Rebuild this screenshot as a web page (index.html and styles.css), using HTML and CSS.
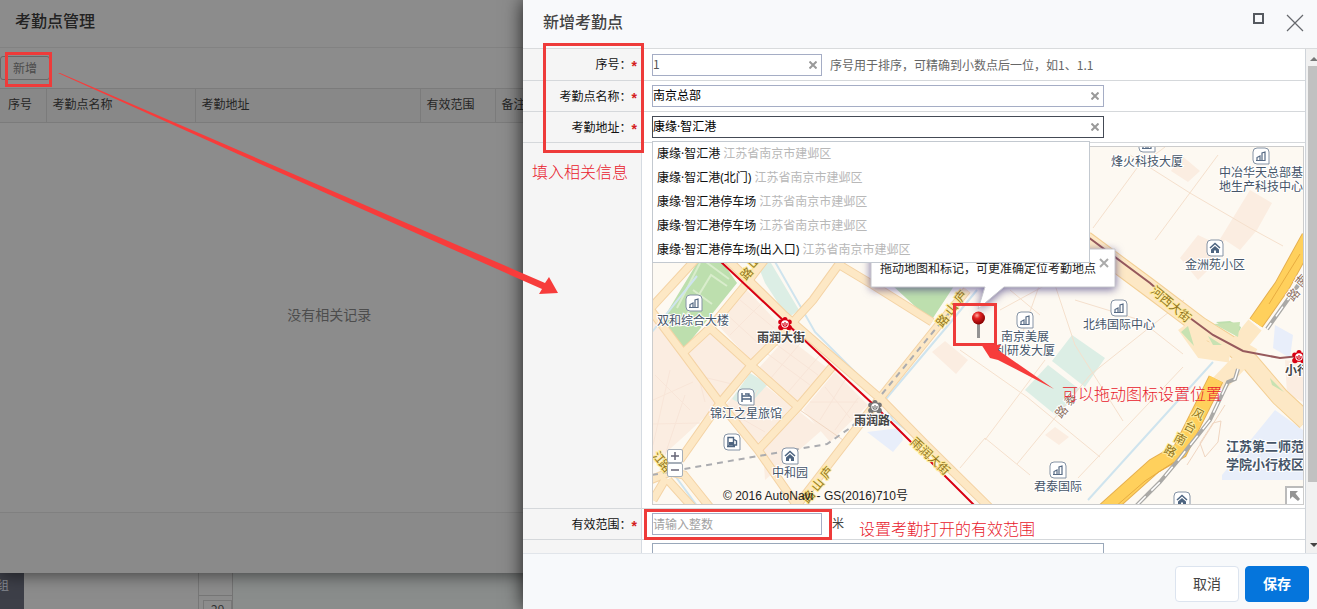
FILE: index.html
```html
<!DOCTYPE html>
<html lang="zh-CN">
<head>
<meta charset="utf-8">
<title>考勤点管理</title>
<link rel="stylesheet" href="styles.css">
</head>
<body>
<div class="desktop">
  <div class="backdrop">
    <div class="backdrop-menu">组</div>
    <div class="backdrop-pane"></div>
    <div class="backdrop-cal"><span>29</span></div>
    <div class="backdrop-rest"></div>
  </div>

  <section class="window list-window">
    <h1 class="list-title">考勤点管理</h1>
    <div class="toolbar"><button class="add-button" type="button">新增</button></div>
    <table class="list-table">
      <thead><tr><th class="col-no">序号</th><th class="col-name">考勤点名称</th><th class="col-address">考勤地址</th><th class="col-range">有效范围</th><th>备注</th></tr></thead>
    </table>
    <p class="empty">没有相关记录</p>
    <div class="list-footer"></div>
  </section>

  <section class="window form-window">
    <header class="form-header">
      <h2>新增考勤点</h2>
      <button class="window-button" type="button" aria-label="最大化"><svg width="12" height="12" viewBox="0 0 12 12"><rect x="1" y="1" width="9" height="9" fill="none" stroke="#55595f" stroke-width="2"/></svg></button>
      <button class="window-button close-button" type="button" aria-label="关闭"><svg width="20" height="20" viewBox="0 0 20 20"><path d="M2 2l16 16M18 2l-16 16" stroke="#66696d" stroke-width="1.200"/></svg></button>
    </header>

    <div class="form-body">
      <form class="fields" id="point">
        <div class="row">
          <label class="name" for="no">序号<i>：</i><b>*</b></label>
          <div class="value">
            <span class="box short"><input id="no" type="text" value="1"><button type="button" class="clear" aria-label="清除"><svg width="8" height="8" viewBox="0 0 8 8"><path d="M.5.5l7 7M7.500.5l-7 7"/></svg></button></span>
            <span class="hint">序号用于排序<i>，</i>可精确到小数点后一位<i>，</i>如1、1.1</span>
          </div>
        </div>
        <div class="row">
          <label class="name" for="pname">考勤点名称<i>：</i><b>*</b></label>
          <div class="value">
            <span class="box"><input class="filled" id="pname" type="text" value="南京总部"><button type="button" class="clear" aria-label="清除"><svg width="8" height="8" viewBox="0 0 8 8"><path d="M.5.5l7 7M7.500.5l-7 7"/></svg></button></span>
          </div>
        </div>
        <div class="row">
          <label class="name" for="addr">考勤地址<i>：</i><b>*</b></label>
          <div class="value">
            <span class="box"><input class="filled active" id="addr" type="text" value="康缘·智汇港"><button type="button" class="clear" aria-label="清除"><svg width="8" height="8" viewBox="0 0 8 8"><path d="M.5.5l7 7M7.500.5l-7 7"/></svg></button></span>
            <ul class="suggest">
              <li>康缘·智汇港 <span>江苏省南京市建邺区</span></li>
              <li>康缘·智汇港(北门) <span>江苏省南京市建邺区</span></li>
              <li>康缘·智汇港停车场 <span>江苏省南京市建邺区</span></li>
              <li>康缘·智汇港停车场 <span>江苏省南京市建邺区</span></li>
              <li>康缘·智汇港停车场(出入口) <span>江苏省南京市建邺区</span></li>
            </ul>
          </div>
        </div>
        <div class="row map-row">
          <div class="name"></div>
          <div class="value">
            <div class="map">
              <svg class="map-art" viewBox="653 147 650 357" preserveAspectRatio="xMidYMid slice" role="img" aria-label="地图">
                <defs>
                  <g id="badge"><path d="M-4-8H4Q8-8 8-4V8H-4Q-8 8-8 4V-4Q-8-8-4-8z" fill="#fff" stroke="#8593a5"/></g>
                  <g id="building"><use href="#badge"/><path d="M-5 4.500H4V-4L1-3V4.500M-4 4V1.500L-1 0V4" fill="none" stroke="#566a84" stroke-width="1.200"/></g>
                  <g id="home"><use href="#badge"/><path d="M-5 0L0-4.500 5 0" fill="none" stroke="#4d6480" stroke-width="1.500"/><path d="M-4 1.500L0-2 4 1.500V5H1V2.500H-1V5H-4z" fill="#4d6480"/></g>
                  <g id="hotel"><use href="#badge"/><path d="M-4-4V5M-4 2H5M5-1V5M-4-1H5M-1-3H3V-1" fill="none" stroke="#4d6480" stroke-width="1.400"/></g>
                  <g id="fuel"><use href="#badge"/><path d="M-4-4.500H1.500V4H-4zM-5 4.500H3M2-2.500L4.500-1V3H2" fill="none" stroke="#4d6480" stroke-width="1.400"/><path d="M-3 0H1V3H-3z" fill="#4d6480"/></g>
                  <g id="metro"><circle cy="-4.500" r="2.500"/><circle cx="4.300" cy="-2" r="2.500"/><circle cx="-4.300" cy="-2" r="2.500"/><circle cx="4" cy="3.500" r="2.800"/><circle cx="-4" cy="3.500" r="2.800"/><circle r="5"/><circle r="3.700" fill="#fff"/><path d="M-2-1Q-2.500 2.200 0 2.200T2-1M0-2V1" fill="none" stroke="currentColor" stroke-width="1.200"/></g>
                  <radialGradient id="pin" cx=".38" cy=".3" r=".7"><stop offset="0" stop-color="#ffaca0"/><stop offset=".35" stop-color="#e32222"/><stop offset="1" stop-color="#850000"/></radialGradient>
                  <g id="streets" fill="none">
                    <path d="M650 309L683 353 720 403 758 450 800 510M650 309L695 260M683 353L710 328 743 288 766 258M710 328L753 367 798 407M680 460L720 403 753 363 783 333 813 300 842 260M758 450L798 407 832 367M838 264L873 285 932 322"/>
                    <path d="M722 254L785 316 882 400 925 444 992 510"/>
                    <path d="M795 508L873 407 933 332 967 290"/>
                    <path d="M650 480L670 472 684 475 712 510M653 500L666 478M668 480L695 510"/>
                  </g>
                </defs>
                <rect x="640" y="130" width="680" height="400" fill="#fdf9f2"/>
                <g fill="#fbede1">
                  <path d="M652 318L720 403 680 440 652 465zM715 322L745 288 783 328 753 363zM757 370L787 337 830 370 798 405zM803 410L835 372 868 405 830 442zM724 407L752 375 792 407 758 443zM685 350L710 332 748 367 720 397zM763 450L800 412 822 430 765 480z"/>
                  <path d="M932 352L945 341 968 360 956 374zM1181 155L1200 171 1188 182 1171 171zM1250 190L1272 203 1257 230 1240 250 1225 240 1210 268 1198 280 1180 258 1198 235 1217 244zM1045 435L1055 427 1069 437 1059 445zM1285 360L1303 362V402L1287 394z"/>
                </g>
                <path d="M660 324L697 263H723L737 283 683 350zM893 286H954L931 321zM1216 322L1230 321 1241 327 1238 337z" fill="#bddfae"/>
                <path d="M677 308L700 263M686 316L711 275 727 286M693 290L712 304M706 262L729 279" fill="none" stroke="#d9edcc" stroke-width="2"/>
                <path d="M757 263H771L799 310 788 318 765 283zM1072 335L1105 358 1085 387 1052 361zM1048 365L1079 389 1058 417 1025 390zM750 373L768 384 747 407 732 399z" fill="#dceee5"/>
                <path d="M867 432L900 428 903 440 893 452zM1275 325L1293 335 1290 358 1273 348zM1222 475L1275 410 1303 430V480H1222z" fill="#e8eefa"/>
                <g fill="none" stroke="#f6ddcb" stroke-width="1">
                  <path d="M655 375L690 410M653 400L693 382M670 370L653 445M653 424L700 423M685 395L665 455M695 362L705 402M695 375L732 384M765 352L810 385M773 342L818 375M765 385L803 340M783 398L820 355M810 402H858M825 387L850 418M820 420L845 380M835 430L858 398M723 408L765 432M738 425L758 390M724 312L758 343M740 300L774 328M730 335L762 303" stroke="#f8e5d8"/>
                  <path d="M1093 228L1137 168 1165 147M1155 240L1218 155M1130 155L1190 193 1250 228 1283 246M1010 290L1040 315M1050 255L1020 340M1040 240L1075 345 1123 421M960 350L1027 397 1100 457M985 440L1045 360M1017 464L1090 375 1184 300M985 438L1030 475M1075 300L1140 320 1183 354M1078 478L1183 367M960 468L985 438M1000 310L1110 250" stroke="#f5e0cd"/>
                  <path d="M800 410L843 440M1187 465L1225 405M1200 443L1213 423 1221 421 1218 442 1205 457z" stroke="#f0d6c1"/>
                </g>
                <path d="M774 260L815 332 880 397 893 420 920 440M885 400L950 323 977 290M1088 500L1213 362M652 332L697 276M660 455L700 510" fill="none" stroke="#cfe4ee" stroke-width="2"/>
                <use href="#streets" stroke="#f4d3a5" stroke-width="9"/>
                <use href="#streets" stroke="#fde8c5" stroke-width="7"/>
                <path d="M1085 240L1147 286 1200 326 1232 346 1250 362 1280 397 1306 421" fill="none" stroke="#f3cf94" stroke-width="19"/>
                <path d="M1085 240L1147 286 1200 326 1232 346 1250 362 1280 397 1306 421M1250 345L1240 362 1218 385M1185 325L1203 350 1230 354M1255 325L1237 347" fill="none" stroke="#fde8c5" stroke-width="17"/>
                <path d="M1214 324L1240 322 1238 337zM1208 336L1222 345 1213 345zM1181 332L1194 346 1188 326zM1270 378L1284 392 1272 385z" fill="#c8e2b2"/>
                <g fill="none"><path d="M1309 237L1282 286 1256 323M1216 379L1180 451 1154 466 1105 510" stroke="#e5af50" stroke-width="16"/><path d="M1309 237L1282 286 1256 323M1216 379L1180 451 1154 466 1105 510" stroke="#ffd05c" stroke-width="14"/><path d="M1174 462L1145 481 1115 507M1300 254L1269 304" stroke="#e8ac40"/></g>
                <path d="M1306 274L1267 329M1238 369L1235 379 1228 382 1210 420 1180 458 1160 482 1135 507" fill="none" stroke="#aaa9a6" stroke-width="4"/>
                <path d="M1306 274L1267 329M1238 369L1235 379 1228 382 1210 420 1180 458 1160 482 1135 507" fill="none" stroke="#fff" stroke-width="1.500" stroke-dasharray="12 8"/>
                <path d="M652 475L690 468 770 454 827 444 850 428 875 406M882 394L933 332 957 304" fill="none" stroke="#abacb0" stroke-width="2" stroke-dasharray="6 5"/>
                <path d="M719 260L785 322 875 406 974 505" fill="none" stroke="#d80012" stroke-width="2"/>
                <path d="M1088 237L1150 283 1190 318 1213 335 1243 351 1280 358 1300 356" fill="none" stroke="#96595c" stroke-width="2"/>
                <g class="street-label">
                  <text x="746 753" y="281 269" rotate="-48">路山</text>
                  <text x="942 951 960" y="328 316 304" rotate="-50">路山庐</text>
                  <text x="808 817 826" y="504 492 480" rotate="-50">路山庐</text>
                  <text transform="translate(910 443) rotate(43)">雨润大街</text>
                  <text transform="translate(1150 292) rotate(40)">河西大街</text>
                  <text x="1191 1183 1173 1163" y="415 428 440 452" rotate="28">风台南路</text>
                  <text x="652 658" y="456 464" rotate="50">江路</text>
                </g>
                <g class="minor-label"><text x="1061 1070" y="419 407" rotate="-50">路泰</text><text x="1293 1301" y="302 288" rotate="-50">路南</text></g>
                <g class="place">
                  <use href="#building" x="694" y="303"/><text x="693" y="325">双和综合大楼</text>
                  <use href="#hotel" x="746" y="397"/><text x="746" y="418">锦江之星旅馆</text>
                  <use href="#fuel" x="732" y="442"/>
                  <use href="#home" x="790" y="456"/><text x="790" y="477">中和园</text>
                  <use href="#building" x="1147" y="144"/><text x="1147" y="166">烽火科技大厦</text>
                  <use href="#building" x="1261" y="156"/><text x="1261" y="177">中冶华天总部基</text><text x="1261" y="191">地生产科技中心</text>
                  <use href="#home" x="1215" y="248"/><text x="1215" y="269">金洲苑小区</text>
                  <use href="#building" x="1119" y="308"/><text x="1119" y="329">北纬国际中心</text>
                  <use href="#building" x="1025" y="320"/><text x="1025" y="341">南京美展</text><text x="1025" y="355">利研发大厦</text>
                  <use href="#building" x="1058" y="470"/><text x="1058" y="491">君泰国际</text>
                  <use href="#home" x="1182" y="500"/>
                  <g class="strong"><text x="1265" y="451">江苏第二师范</text><text x="1265" y="469">学院小行校区</text></g>
                </g>
                <g class="station">
                  <use href="#metro" x="785" y="324" fill="#d80012" color="#d80012"/><text x="781" y="342">雨润大街</text>
                  <use href="#metro" x="875" y="407" fill="#777" color="#777"/><text x="872" y="425">雨润路</text>
                  <use href="#metro" x="1299" y="357" fill="#d80012" color="#d80012"/><text x="1297" y="375">小行</text>
                </g>
                <text class="copyright" x="723" y="500">© 2016 AutoNavi - GS(2016)710号</text>
                <path class="bubble" d="M871 249H1115V287H1004L978 309 985 287H871z"/>
                <text class="bubble-text" x="880" y="273">拖动地图和标记<tspan class="mid">，</tspan>可更准确定位考勤地点</text>
                <path d="M1100 259l8 8M1108 259l-8 8" stroke="#aaa" stroke-width="2"/>
                <path d="M977 320H980V338H977z" fill="#939393"/><circle cx="978.500" cy="318" r="6.500" fill="url(#pin)"/>
              </svg>
              <div class="zoom-buttons"><button type="button" aria-label="放大"><svg width="10" height="10" viewBox="0 0 10 10"><path d="M1 5h8M5 1v8"/></svg></button><button type="button" aria-label="缩小"><svg width="10" height="10" viewBox="0 0 10 10"><path d="M1 5h8"/></svg></button></div>
              <button class="expand" type="button" aria-label="展开鹰眼"><svg width="12" height="12" viewBox="0 0 12 12"><path d="M1 1H9L6.500 3.500 11 9 9 11 3.500 6.500 1 9z" fill="#959595"/></svg></button>
            </div>
          </div>
        </div>
        <div class="row">
          <label class="name" for="range">有效范围<i>：</i><b>*</b></label>
          <div class="value"><span class="box short"><input id="range" type="text" placeholder="请输入整数"></span><span class="unit">米</span></div>
        </div>
        <div class="row last-row">
          <div class="name"></div>
          <div class="value"><textarea class="note" aria-label="备注"></textarea></div>
        </div>
      </form>
      <div class="scrollbar"><span class="up"></span><span class="thumb"></span><span class="down"></span></div>
    </div>

    <footer class="form-footer">
      <button class="action" type="button">取消</button>
      <button class="action primary" type="submit" form="point">保存</button>
    </footer>
  </section>

  <svg class="notes" width="1317" height="609" viewBox="0 0 1317 609">
    <g fill="none" stroke="#ee3b3a" stroke-width="3">
      <rect x="6.500" y="53.500" width="44" height="32"/>
      <rect x="544.500" y="44.500" width="98" height="107"/>
      <rect x="645.500" y="510.500" width="185" height="28"/>
      <rect x="954.500" y="304.500" width="41" height="40"/>
    </g>
    <g fill="#f73c3b">
      <path d="M58 73L60 73 545 283 549 277 558 293 539 294 542 289 240 155z"/>
      <path d="M981 344L1001 345 998 350 1054 389 998 360 990 358z"/>
    </g>
    <g class="note-text">
      <text x="532" y="178">填入相关信息</text>
      <text x="1062" y="400">可以拖动图标设置位置</text>
      <text x="859" y="535">设置考勤打开的有效范围</text>
    </g>
  </svg>
</div>
</body>
</html>
```

FILE: styles.css
```css
* { box-sizing: border-box; }
body, h1, h2, p, ul { margin: 0; padding: 0; }
body { font: 12px/18px "Noto Sans CJK SC", sans-serif; color: #222; }
button, input, textarea { font: inherit; padding: 0; margin: 0; border-radius: 0; }
button { cursor: pointer; }
svg { display: block; }
i, .mid { font-family: "Noto Sans CJK TC", sans-serif; font-style: normal; }

.desktop { position: relative; height: 100vh; overflow: hidden; background: #8c8c8c; }
.window { position: absolute; display: flex; flex-direction: column; }

/* page under the windows */
.backdrop { display: flex; height: 100%; padding-top: 560px; }
.backdrop-menu { width: 24px; padding-top: 16px; background: #3d3f48; color: #858991; text-indent: -3px; }
.backdrop-pane { width: 175px; border-right: 1px solid #777; }
.backdrop-cal { width: 34px; padding: 36px 0 0 4px; border-right: 1px solid #747474; background: linear-gradient(#8c8c8c 35px, #767676 35px, #767676 36px, #8c8c8c 36px); }
.backdrop-cal span { display: block; padding-left: 7px; margin-top: 4px; border: 1px solid #777; color: #333; line-height: 16px; }
.backdrop-rest { flex: 1; background: #8a8d8c; }

/* list window */
.list-window { left: 0; top: 0; width: 50%; height: 573px; background: #8c8c8c; box-shadow: 0 2px 16px rgba(0, 0, 0, .55); }
.list-title { height: 48px; padding-left: 15px; border-bottom: 1px solid #828282; font-size: 16px; line-height: 40px; font-weight: 500; color: #222; }
.toolbar { height: 40px; padding: 8px 0; }
.add-button { display: block; width: 50px; height: 24px; border: 1px solid #686868; border-radius: 3px; background: #8c8c8c; color: #4b4b4b; }
.list-table { width: 100%; border-collapse: collapse; table-layout: fixed; background: #888; }
.list-table th { height: 34px; padding: 0 0 3px 6px; border: 1px solid #7b7b7b; border-left: 0; text-align: left; font-weight: 400; color: #252525; }
.list-table .col-no { width: 46px; padding-left: 8px; }
.list-table .col-name { width: 149px; }
.list-table .col-address { width: 225px; }
.list-table .col-range { width: 75px; }
.empty { flex: 1; display: flex; align-items: center; justify-content: center; padding-bottom: 7px; color: #4d4d4d; font-size: 14px; }
.list-footer { height: 61px; border-top: 1px solid #808080; background: #8a8a8a; }

/* form window */
.form-window { left: 523px; right: 0; top: 0; bottom: 0; background: #fff; box-shadow: 0 0 18px rgba(0, 0, 0, .8); }
.form-header { display: flex; gap: 20px; height: 49px; padding: 0 12px 0 20px; background: #f8f9fb; border-bottom: 1px solid #d9dbdd; }
.form-header h2 { flex: 1; font-size: 16px; line-height: 42px; font-weight: 500; color: #444; }
.window-button { border: 0; background: none; height: 38px; }
.close-button { height: 46px; }
.form-body { flex: 1; display: flex; min-height: 0; overflow: hidden; }
.fields { flex: 1; min-width: 0; border-right: 1px solid #cfd4da; }
.row { display: flex; height: 31px; border-bottom: 1px solid #d5d8db; }
.row:first-child { height: 32px; }
.name { width: 119px; padding-right: 4px; border-right: 1px solid #d5dbe2; background: #f5f5f5; line-height: 30px; text-align: right; color: #111; white-space: nowrap; }
.name b { color: #d42020; font: 700 14px/18px "Liberation Sans", sans-serif; vertical-align: -2px; }
.value { position: relative; flex: 1; min-width: 0; display: flex; align-items: center; padding-left: 10px; }
.box { position: relative; width: 452px; height: 22px; }
.box.short { width: 170px; }
.box input { display: block; width: 100%; height: 100%; border: 1px solid #a5adc5; padding: 0 22px 2px 0; background: #fff; color: #555; outline: 0; }
.box input.filled { color: #000; font-family: "Noto Sans", "Noto Sans CJK SC", sans-serif; }
.box input.active { border-color: #444a55; }
.box input::placeholder { color: #a2a2a2; opacity: 1; }
.clear { position: absolute; right: 5px; top: 3px; width: 8px; height: 16px; border: 0; background: none; }
.clear path { stroke: #999; stroke-width: 2; }
.hint { margin-left: 8px; color: #666; }
.unit { margin-left: 10px; padding-bottom: 2px; color: #444; }
.suggest { position: absolute; z-index: 2; left: 10px; top: 100%; width: 438px; margin-top: -1px; border: 1px solid #c3c9d0; background: #fff; list-style: none; font-family: "Noto Sans", "Noto Sans CJK SC", sans-serif; }
.suggest li { height: 24px; padding-left: 4px; line-height: 24px; color: #111; white-space: nowrap; }
.suggest span { color: #b8b8b8; }

.row.map-row { height: 366px; }
.map-row .value { padding: 3px 1px 3px 10px; align-items: stretch; }
.map { position: relative; flex: 1; border: 1px solid #ccc; overflow: hidden; }
.map-art { width: 100%; height: 100%; }
.place text { font-size: 12px; fill: #465568; text-anchor: middle; stroke: #fff; stroke-width: 2px; paint-order: stroke; }
.place .strong text { font-size: 13px; font-weight: 700; }
.station text { font-size: 12px; font-weight: 700; fill: #444; text-anchor: middle; stroke: #fff; stroke-width: 2px; paint-order: stroke; }
.street-label text { font-size: 12px; fill: #92751c; stroke: #ffec9e; stroke-width: 2px; paint-order: stroke; }
.minor-label text { font-size: 12px; fill: #8f7263; stroke: #fff; stroke-width: 2px; paint-order: stroke; }
.copyright { font: 12px "Liberation Sans", "Noto Sans CJK SC", sans-serif; fill: #222; }
.bubble { fill: #fff; stroke: #c6c6cc; filter: drop-shadow(0 2px 4px rgba(60, 50, 120, .7)); }
.bubble-text { font-size: 12px; fill: #222; }
.zoom-buttons { position: absolute; left: 14px; bottom: 27px; }
.zoom-buttons button { display: flex; align-items: center; justify-content: center; width: 16px; height: 14px; border: 1px solid #a6afb9; border-radius: 2px; background: #fff; }
.zoom-buttons path { stroke: #667; stroke-width: 1.5; }
.expand { position: absolute; right: 0; bottom: 0; display: flex; align-items: center; justify-content: center; width: 18px; height: 18px; border: solid #bbb; border-width: 2px 0 0 2px; background: #fff; }
.row.last-row { height: 60px; }
.last-row .value { align-items: flex-start; padding-top: 3px; }
.note { width: 452px; height: 50px; border: 1px solid #9aa8ba; resize: none; }

.scrollbar { display: flex; flex-direction: column; width: 11px; padding: 8px 0 6px 2px; background: #f1f1f1; }
.scrollbar .up { width: 8px; height: 4px; margin: 0 0 5px 2px; border: solid transparent; border-width: 0 4px 4px; border-bottom-color: #777; }
.scrollbar .thumb { height: 416px; background: #c1c1c1; }
.scrollbar .down { width: 8px; height: 4px; margin: auto 0 0 2px; border: solid transparent; border-width: 4px 4px 0; border-top-color: #444; }

.form-footer { display: flex; justify-content: flex-end; align-items: center; gap: 6px; height: 56px; padding: 4px 8px 0 0; border-top: 1px solid #e1e5ea; background: #f7f9fb; }
.action { width: 64px; height: 36px; padding-bottom: 2px; border: 1px solid #dce4ef; border-radius: 4px; background: #fff; color: #444; font-size: 14px; }
.action.primary { border-color: #0575dc; background: #0575dc; color: #fff; font-weight: 700; }

/* callouts drawn over both windows */
.notes { position: absolute; left: 0; top: 0; pointer-events: none; }
.note-text text { font-size: 16px; font-weight: 300; fill: #e8202c; }
```
